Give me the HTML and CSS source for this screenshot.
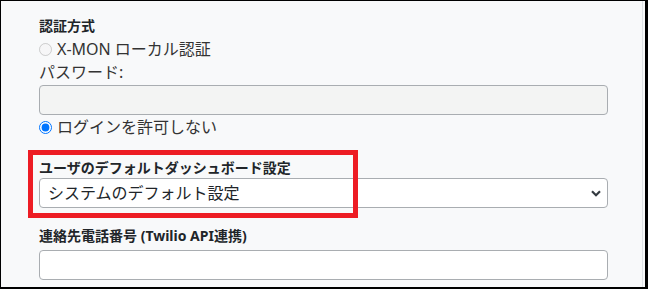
FILE: index.html
```html
<!DOCTYPE html>
<html lang="ja">
<head>
    <meta charset="UTF-8">
    <meta name="viewport" content="width=device-width, initial-scale=1.0">
    <title>ユーザ設定</title>
    <link rel="stylesheet" href="styles.css">
</head>
<body>
    <div class="frame">
        <div class="panel">
            <div class="field-label">認証方式</div>
            <label class="radio-row disabled">
                <input type="radio" name="auth" disabled>
                X-MON ローカル認証
            </label>
            <div class="plain-label">パスワード:</div>
            <input type="password" class="form-control" disabled>
            <label class="radio-row">
                <input type="radio" name="auth" checked>
                ログインを許可しない
            </label>

            <div class="group highlighted">
                <div class="field-label">ユーザのデフォルトダッシュボード設定</div>
                <div class="select-wrap">
                    <select class="form-control">
                        <option>システムのデフォルト設定</option>
                    </select>
                    <svg class="chevron" width="10" height="7" viewBox="0 0 10 7">
                        <path d="M1 1.2 L5 5.2 L9 1.2" fill="none" stroke="#343a40" stroke-width="2.2"/>
                    </svg>
                </div>
                <div class="marker"></div>
            </div>

            <div class="group phone">
                <div class="field-label">連絡先電話番号 (Twilio API連携)</div>
                <input type="text" class="form-control">
            </div>
        </div>
    </div>
</body>
</html>
```

FILE: styles.css
```css
* {
    margin: 0;
    padding: 0;
    box-sizing: border-box;
}

body {
    font-family: "Noto Sans", "Noto Sans CJK JP", sans-serif;
    background-color: #f8f9fa;
    color: #212529;
    width: 648px;
    height: 289px;
    overflow: hidden;
}

.frame {
    width: 648px;
    height: 289px;
    border-style: solid;
    border-color: #000;
    border-width: 1px 3px 2px 1px;
    overflow: hidden;
}

.panel {
    width: 642px;
    height: 100%;
    border-right: 1px solid #dee2e6;
    padding: 15px 0 0 38px;
}

.field-label {
    font-size: 14px;
    font-weight: bold;
    line-height: 20px;
    height: 20px;
}

.plain-label {
    font-size: 16px;
    line-height: 22px;
    height: 22px;
    color: #333;
}

.radio-row {
    display: flex;
    align-items: center;
    gap: 5px;
    font-size: 16px;
    line-height: 24px;
    height: 24px;
    color: #333;
}

.radio-row.disabled {
    margin-top: 1px;
}

.radio-row input {
    width: 13px;
    height: 13px;
    margin: 0;
    accent-color: #0075ff;
}

.form-control {
    display: block;
    width: 569px;
    height: 30px;
    border: 1px solid #a9adb1;
    border-radius: 4px;
    background-color: #fff;
    font-family: inherit;
    font-size: 16px;
    color: #212529;
    padding: 0 8px;
}

.form-control:disabled {
    background-color: #f3f4f3;
    margin-top: 2px;
}

select.form-control {
    appearance: none;
    -webkit-appearance: none;
    line-height: 28px;
}

.group {
    position: relative;
}

.highlighted {
    margin-top: 19px;
}

.select-wrap {
    position: relative;
    width: 569px;
}

.chevron {
    position: absolute;
    right: 7px;
    top: 12px;
}

.marker {
    position: absolute;
    left: -11px;
    top: -8px;
    width: 330px;
    height: 68px;
    border: 5px solid #ed1c24;
}

.phone {
    margin-top: 18px;
}

.phone .form-control {
    margin-top: 4px;
}
```
